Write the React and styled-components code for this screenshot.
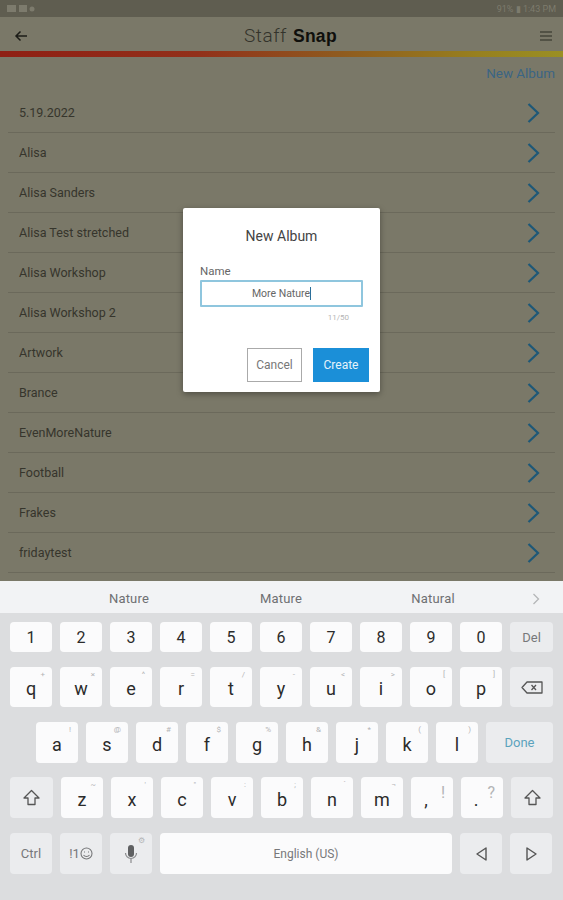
import React from 'react'
import styled, { createGlobalStyle } from 'styled-components'

const Global = createGlobalStyle`
  html, body { margin: 0; padding: 0; height: 900px; overflow: hidden; background: #dcdddf; }
  * { box-sizing: border-box; }
  body { font-family: Roboto, "Liberation Sans", sans-serif; }
`

const Page = styled.div`
  width: 563px;
  height: 900px;
  display: flex;
  flex-direction: column;
`

const AppArea = styled.div`
  position: relative;
  flex: 0 0 581px;
  background: #7a7868;
  overflow: hidden;
  display: flex;
  flex-direction: column;
`

const StatusBar = styled.div`
  flex: 0 0 17px;
  background: #5f5d50;
  display: flex;
  align-items: center;
  justify-content: space-between;
  padding: 0 7px;
  color: #7d7b6d;
  font-size: 9px;
`

const StatusIcons = styled.div`
  display: flex;
  gap: 3px;
  align-items: center;
`

const Header = styled.div`
  flex: 0 0 34px;
  display: flex;
  align-items: center;
  justify-content: space-between;
  padding: 3px 10px 0 13px;
  color: #1f1f1a;
`

const Title = styled.div`
  margin-left: 13px;
  font-family: Roboto, sans-serif;
  font-size: 19px;
  letter-spacing: 0.5px;
  font-weight: 300;
  color: #33332b;
  b { font-family: "Liberation Sans", sans-serif; font-size: 17.5px; color: #0f0f0c; font-weight: 700; margin-left: 1px; letter-spacing: 0.3px; }
`

const GradientBar = styled.div`
  flex: 0 0 6px;
  background: linear-gradient(90deg, #8f1f14 0%, #92301a 35%, #8f5a1f 60%, #97801f 85%, #9a8f24 100%);
`

const NewAlbum = styled.div`
  flex: 0 0 36px;
  text-align: right;
  padding: 9px 8px 0 0;
  font-size: 13.4px;
  color: #3a6584;
`

const Row = styled.div`
  flex: 0 0 40px;
  margin: 0 8px;
  display: flex;
  align-items: center;
  justify-content: space-between;
  padding: 0 15px 0 11px;
  font-size: 12.5px;
  color: #36352c;
  border-bottom: 1px solid #6b695b;
`

const Overlay = styled.div`
  position: absolute;
  left: 183px;
  top: 208px;
  width: 197px;
  height: 184px;
  background: #fff;
  border-radius: 2px;
  box-shadow: 0 2px 6px rgba(0, 0, 0, 0.35);
  padding: 20px 17px 0;
  display: flex;
  flex-direction: column;
`

const DialogTitle = styled.div`
  text-align: center;
  font-size: 14px;
  line-height: 16px;
  color: #444;
`

const FieldLabel = styled.div`
  margin-top: 21px;
  font-size: 11.5px;
  line-height: 13px;
  color: #666;
`

const NameField = styled.div`
  width: 163px;
  height: 27px;
  margin-top: 2px;
  border: 2px solid #8fc6de;
  border-radius: 1px;
  display: flex;
  align-items: center;
  justify-content: center;
  font-size: 10.5px;
  color: #666;
  span { border-right: 1px solid #2a6f9a; line-height: 13px; }
`

const Counter = styled.div`
  text-align: right;
  font-size: 8px;
  margin: 6px 14px 0 0;
  color: #b5b5b5;
`

const DialogButtons = styled.div`
  display: flex;
  justify-content: flex-end;
  gap: 11px;
  margin: 26px -6px 0 0;
`

const DialogButton = styled.div`
  width: ${p => (p.$primary ? '56px' : '55px')};
  height: 34px;
  display: flex;
  align-items: center;
  justify-content: center;
  font-size: 12px;
  color: ${p => (p.$primary ? '#e6f3fb' : '#777')};
  background: ${p => (p.$primary ? '#1b8fd8' : '#fff')};
  border: ${p => (p.$primary ? 'none' : '1px solid #aaa')};
`

const Keyboard = styled.div`
  flex: 1;
  background: #dcdddf;
  border-top: 1px solid #f2f3f4;
  display: flex;
  flex-direction: column;
`

const Suggestions = styled.div`
  flex: 0 0 31px;
  background: #f2f3f5;
  position: relative;
  display: grid;
  grid-template-columns: 152px 152px 152px;
  justify-items: center;
  align-items: center;
  padding: 2px 0 0 53px;
  font-size: 13px;
  color: #6e6f72;
  letter-spacing: 0.2px;
`

const MoreArrow = styled.div`
  position: absolute;
  right: 23px;
  top: 11px;
  color: #b5b6b8;
  display: flex;
`

const KeyRows = styled.div`
  display: flex;
  flex-direction: column;
  padding: 9px 0 0 10px;
`

const KeyRow = styled.div`
  display: flex;
  gap: 8px;
  height: ${p => p.$h}px;
  margin-bottom: ${p => p.$mb}px;
  padding-left: ${p => p.$indent || 0}px;
`

const Key = styled.div`
  position: relative;
  width: ${p => p.$w || 42}px;
  height: 100%;
  background: ${p => (p.$fn ? '#ebecee' : '#fbfbfc')};
  border-radius: 4px;
  display: flex;
  align-items: center;
  justify-content: center;
  font-size: ${p => p.$size || 17}px;
  color: ${p => p.$color || '#2b2b2b'};
  padding-top: ${p => p.$pt || 0}px;
  padding-right: ${p => p.$pr || 0}px;
`

const Hint = styled.span`
  position: absolute;
  top: 3px;
  right: 7px;
  font-size: 8px;
  line-height: 10px;
  color: #b3b4b6;
`

const BigHint = styled.span`
  position: absolute;
  top: 7px;
  right: 8px;
  font-size: 16px;
  line-height: 18px;
  color: #b3b4b6;
`

const Back = () => (
  <svg width="16" height="16" viewBox="0 0 16 16" fill="none" stroke="#1c1c17" strokeWidth="1.5">
    <path d="M14 8H3M7.5 3.5 3 8l4.500 4.500" />
  </svg>
)

const Burger = () => (
  <svg width="14" height="12" viewBox="0 0 14 12" stroke="#45453a" strokeWidth="1.6">
    <path d="M1 2h12M1 6h12M1 10h12" />
  </svg>
)

const Chevron = () => (
  <svg width="13" height="20" viewBox="0 0 13 20" fill="none" stroke="#1d5878" strokeWidth="2.2">
    <path d="M1.500 1 11 10l-9.500 9" />
  </svg>
)

const ShiftIcon = () => (
  <svg width="17" height="17" viewBox="0 0 17 17" fill="none" stroke="#555" strokeWidth="1.3" strokeLinejoin="round">
    <path d="M8.500 1.500 16 9h-4v6.500H5V9H1z" />
  </svg>
)

const BackspaceIcon = () => (
  <svg width="22" height="13" viewBox="0 0 22 13" fill="none" stroke="#555" strokeWidth="1.3" strokeLinejoin="round">
    <path d="M6 1h15v11H6L1 6.500z" />
    <path d="M10.500 4l4.500 5M15 4l-4.500 5" />
  </svg>
)

const MicIcon = () => (
  <svg width="14" height="20" viewBox="0 0 14 20" fill="#5f6062" stroke="none">
    <rect x="4" y="1" width="6" height="12" rx="3" />
    <path d="M1.500 9a5.500 5.500 0 0 0 11 0" fill="none" stroke="#8a8b8d" strokeWidth="1.2" />
    <path d="M7 15v4" stroke="#8a8b8d" strokeWidth="1.2" />
  </svg>
)

const EmojiIcon = () => (
  <svg width="13" height="13" viewBox="0 0 13 13" fill="none" stroke="#77787a" strokeWidth="1.1">
    <circle cx="6.500" cy="6.500" r="5.500" />
    <path d="M4 5h1M8 5h1M3.500 8c1.500 2 4.500 2 6 0" />
  </svg>
)

const Triangle = ({ flip }) => (
  <svg width="11" height="14" viewBox="0 0 11 14" fill="none" stroke="#555" strokeWidth="1.4" strokeLinejoin="round">
    <path d={flip ? 'M1 1v12l9-6z' : 'M10 1v12L1 7z'} />
  </svg>
)

const albums = ['5.19.2022', 'Alisa', 'Alisa Sanders', 'Alisa Test stretched', 'Alisa Workshop', 'Alisa Workshop 2',
  'Artwork', 'Brance', 'EvenMoreNature', 'Football', 'Frakes', 'fridaytest']

const numbers = ['1', '2', '3', '4', '5', '6', '7', '8', '9', '0']
const topRow = [['q', '+'], ['w', '×'], ['e', '^'], ['r', '='], ['t', '/'], ['y', '-'], ['u', '<'], ['i', '>'], ['o', '['], ['p', ']']]
const midRow = [['a', '!'], ['s', '@'], ['d', '#'], ['f', '$'], ['g', '%'], ['h', '&'], ['j', '*'], ['k', '('], ['l', ')']]
const lowRow = [['z', '~'], ['x', '\''], ['c', '"'], ['v', ':'], ['b', ';'], ['n', '`'], ['m', '¬']]

export default function App() {
  return (
    <Page>
      <Global />
      <AppArea>
        <StatusBar>
          <StatusIcons>
            <svg width="28" height="10" viewBox="0 0 28 10" fill="#7d7b6d">
              <rect x="0" y="1" width="9" height="7" />
              <rect x="12" y="1" width="8" height="7" />
              <circle cx="25" cy="5" r="2.500" />
            </svg>
          </StatusIcons>
          <span>91% ▮ 1:43 PM</span>
        </StatusBar>
        <Header>
          <Back />
          <Title>Staff <b>Snap</b></Title>
          <Burger />
        </Header>
        <GradientBar />
        <NewAlbum>New Album</NewAlbum>
        {albums.map(name => (
          <Row key={name}>
            <span>{name}</span>
            <Chevron />
          </Row>
        ))}
        <Overlay>
          <DialogTitle>New Album</DialogTitle>
          <FieldLabel>Name</FieldLabel>
          <NameField><span>More Nature</span></NameField>
          <Counter>11/50</Counter>
          <DialogButtons>
            <DialogButton>Cancel</DialogButton>
            <DialogButton $primary>Create</DialogButton>
          </DialogButtons>
        </Overlay>
      </AppArea>
      <Keyboard>
        <Suggestions>
          <span>Nature</span>
          <span>Mature</span>
          <span>Natural</span>
          <MoreArrow>
            <svg width="8" height="12" viewBox="0 0 8 12" fill="none" stroke="currentColor" strokeWidth="1.3">
              <path d="M1.500 1 6.500 6l-5 5" />
            </svg>
          </MoreArrow>
        </Suggestions>
        <KeyRows>
          <KeyRow $h={30} $mb={15}>
            {numbers.map(n => <Key key={n} $size={16}>{n}</Key>)}
            <Key $fn $w={43} $size={13} $color="#77787a">Del</Key>
          </KeyRow>
          <KeyRow $h={40} $mb={15}>
            {topRow.map(([k, h]) => <Key key={k} $size={18} $pt={3}>{k}<Hint>{h}</Hint></Key>)}
            <Key $fn $w={43}><BackspaceIcon /></Key>
          </KeyRow>
          <KeyRow $h={41} $mb={14} $indent={26}>
            {midRow.map(([k, h]) => <Key key={k} $size={18} $pt={3}>{k}<Hint>{h}</Hint></Key>)}
            <Key $fn $w={67} $size={13} $color="#5ba3bd">Done</Key>
          </KeyRow>
          <KeyRow $h={41} $mb={15}>
            <Key $fn $w={43}><ShiftIcon /></Key>
            {lowRow.map(([k, h]) => <Key key={k} $size={18} $pt={3}>{k}<Hint>{h}</Hint></Key>)}
            <Key $size={18} $pt={3} $pr={12}>,<BigHint>!</BigHint></Key>
            <Key $size={18} $pt={3} $pr={12}>.<BigHint>?</BigHint></Key>
            <Key $fn $w={42}><ShiftIcon /></Key>
          </KeyRow>
          <KeyRow $h={41} $mb={0}>
            <Key $fn $w={42} $size={13} $color="#77787a">Ctrl</Key>
            <Key $fn $w={42} $size={13} $color="#77787a">!1<EmojiIcon /></Key>
            <Key $fn $w={42}><MicIcon /><Hint>⚙</Hint></Key>
            <Key $w={292} $size={12} $color="#77787a">English (US)</Key>
            <Key $fn $w={42}><Triangle /></Key>
            <Key $fn $w={42}><Triangle flip /></Key>
          </KeyRow>
        </KeyRows>
      </Keyboard>
    </Page>
  )
}
